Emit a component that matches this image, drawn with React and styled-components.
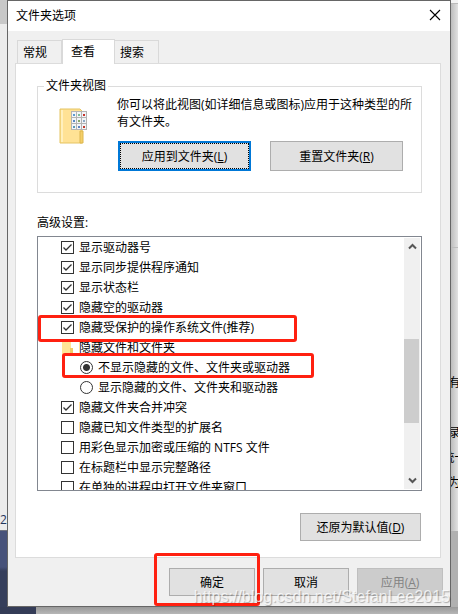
import React, { useState } from 'react';
import styled, { createGlobalStyle, css } from 'styled-components';

const GlobalStyle = createGlobalStyle`
  * {
    box-sizing: border-box;
  }

  body {
    margin: 0;
    font-family: 'Open Sans', 'Noto Sans CJK SC', sans-serif;
    font-size: 12px;
    line-height: 17px;
    color: #000;
    overflow: hidden;
  }
`;

const Desktop = styled.div`
  display: grid;
  grid-template-columns: 7px minmax(0, 1fr) 7px;
  grid-template-rows: auto 1fr;
  position: relative;
  min-height: 100vh;
  background: #b4b4b4;
`;

const LeftStrip = styled.div`
  display: flex;
  flex-direction: column;
  justify-content: flex-end;
  overflow: hidden;
  color: #24365c;
  background: linear-gradient(
    #c8c8c8 0 24px,
    #ececec 24px calc(100% - 77px),
    #6f7380 calc(100% - 77px) calc(100% - 76px),
    #47527a calc(100% - 76px) calc(100% - 40px),
    #353e5b calc(100% - 36px)
  );

  span {
    height: 96px;
    white-space: nowrap;
  }
`;

const RightStrip = styled.div`
  display: flex;
  flex-direction: column;
  justify-content: flex-end;
  align-items: center;
  gap: 8px;
  padding-bottom: 116px;
  overflow: hidden;
  white-space: nowrap;
  background: linear-gradient(
      #f4f4f4 3px,
      #bbb 3px 4px,
      transparent 4px 247px,
      #bdbdbd 247px 248px,
      transparent 248px calc(100% - 76px),
      #b0b0b0 calc(100% - 76px)
    ),
    linear-gradient(to right, #bdbdbd, #e2e2e2);

  span:first-child {
    margin-bottom: 25px;
  }
`;

const BottomStrip = styled.div`
  grid-column: 1 / -1;
  min-height: 7px;
  background: linear-gradient(to right, #343c57 36px, transparent 36px),
    linear-gradient(#999, #b6b6b6);
`;

const Dialog = styled.div`
  display: flex;
  flex-direction: column;
  min-width: 0;
  border: 1px solid #666;
  background: #f0f0f0;
`;

const TitleBar = styled.header`
  display: flex;
  justify-content: space-between;
  align-items: center;
  height: 30px;
  padding: 0 9px 2px 8px;
  background: #fff;
`;

const Title = styled.h1`
  margin: 0;
  font-size: 12px;
  font-weight: 400;
`;

const CloseButton = styled.button`
  display: flex;
  padding: 0;
  border: 0;
  background: none;
`;

const Content = styled.div`
  padding: 8px 9px 0 7px;
`;

const Tabs = styled.div`
  display: flex;
  align-items: flex-end;
  padding-left: 2px;
`;

const Tab = styled.button`
  width: 45px;
  height: 23px;
  padding: 0 0 0 5px;
  border: 1px solid #d9d9d9;
  border-bottom: 0;
  background: #f0f0f0;
  font: inherit;
  text-align: left;

  ${({ $active }) =>
    $active &&
    css`
      width: 53px;
      height: 25px;
      margin: 0 -1px -1px 0;
      padding: 0 0 1px 8px;
      background: #fff;
      z-index: 1;
    `}
`;

const TabPage = styled.main`
  padding: 15px 18px 15px 21px;
  border: 1px solid #dcdcdc;
  background: #fff;
`;

const Group = styled.fieldset`
  display: flex;
  align-items: flex-start;
  min-width: 0;
  height: 114px;
  margin: 0;
  padding: 3px 18px 0 21px;
  border: 1px solid #dcdcdc;
`;

const GroupTitle = styled.legend`
  margin-left: -15px;
  padding: 0 2px;
  line-height: 14px;
`;

const FolderPicture = styled.svg`
  flex: none;
  margin: 12px 30px 0 0;
`;

const GroupBody = styled.div`
  flex: 1;
  min-width: 0;

  p {
    margin: 0 -12px 11px 0;
  }
`;

const ButtonPair = styled.div`
  display: grid;
  grid-template-columns: 1fr 1fr;
  gap: 19px;
  margin-left: 1px;
`;

const PushButton = styled.button`
  width: ${({ $width }) => ($width ? `${$width}px` : 'auto')};
  height: ${({ $tall }) => ($tall ? 30 : 28)}px;
  padding: 0;
  border: 1px solid #adadad;
  background: #e1e1e1;
  color: #000;
  font: inherit;

  ${({ $focused }) =>
    $focused &&
    css`
      border: 2px solid #0078d7;
      outline: 1px dotted #000;
      outline-offset: -3px;
    `}

  &:disabled {
    border-color: #bfbfbf;
    background: #ccc;
    color: #838383;
  }
`;

const ListTitle = styled.h2`
  margin: 21px 0 5px;
  font-size: 12px;
  font-weight: 400;
`;

const ListBox = styled.div`
  display: flex;
  height: 255px;
  padding-right: 1px;
  border: 1px solid #828790;
`;

const Options = styled.div`
  flex: 1;
  min-width: 0;
  overflow: hidden;
  padding-left: 23px;
`;

const Row = styled.div`
  display: flex;
  align-items: center;
  position: relative;
  height: 20px;
  padding-left: ${({ $nested }) => ($nested ? 19 : 0)}px;
  white-space: nowrap;

  label {
    display: flex;
    align-items: center;
    gap: 5px;
  }
`;

const CheckInput = styled.input`
  appearance: none;
  width: 13px;
  height: 13px;
  margin: 0;
  border: 1px solid #333;
  background: #fff;

  &:checked {
    background: #fff
      url("data:image/svg+xml,%3Csvg xmlns='http://www.w3.org/2000/svg' viewBox='0 0 11 11'%3E%3Cpath d='M1.5 5.5 4 8 9.5 2.5' fill='none' stroke='%23333' stroke-width='1.3'/%3E%3C/svg%3E");
  }
`;

const RadioInput = styled.input`
  appearance: none;
  width: 13px;
  height: 13px;
  margin: 0;
  border: 1px solid #333;
  border-radius: 50%;
  background: #fff;

  &:checked {
    background: radial-gradient(circle, #333 3px, #fff 4px);
  }
`;

const SmallFolder = styled.svg`
  flex: none;
  margin-right: 5px;
`;

const Highlight = styled.span`
  position: absolute;
  top: ${({ $top }) => $top}px;
  left: ${({ $left }) => $left}px;
  width: ${({ $width }) => $width}px;
  height: ${({ $height }) => $height}px;
  border: 3px solid #ff2010;
  border-radius: 3px;
  pointer-events: none;
  z-index: 1;
`;

const ScrollBar = styled.div`
  display: flex;
  flex-direction: column;
  flex: none;
  width: 16px;
  margin: 1px 0;
  background: #f0f0f0;
`;

const ScrollButton = styled.button`
  display: flex;
  justify-content: center;
  align-items: center;
  width: 16px;
  height: 17px;
  padding: 0;
  border: 0;
  background: none;
`;

const ScrollTrack = styled.div`
  flex: 1;
  padding-top: 84px;
`;

const ScrollThumb = styled.div`
  width: 15px;
  height: 84px;
  background: #cdcdcd;
`;

const Restore = styled.div`
  display: flex;
  justify-content: flex-end;
  margin: 22px 1px 1px 0;
`;

const Footer = styled.footer`
  display: flex;
  justify-content: flex-end;
  gap: 8px;
  padding: 10px 7px;
`;

const ButtonSlot = styled.div`
  display: flex;
  position: relative;
`;

const Watermark = styled.div`
  position: absolute;
  right: 8px;
  bottom: 9px;
  color: rgba(255, 255, 255, 0.75);
  font-family: 'Liberation Sans', sans-serif;
  font-size: 16px;
  text-shadow: 1px 1px 1px rgba(0, 0, 0, 0.3);
  pointer-events: none;
  z-index: 2;
`;

const tabs = ['常规', '查看', '搜索'];

const initialOptions = [
  { text: '显示驱动器号', type: 'check', on: true },
  { text: '显示同步提供程序通知', type: 'check', on: true },
  { text: '显示状态栏', type: 'check', on: true },
  { text: '隐藏空的驱动器', type: 'check', on: true },
  {
    text: '隐藏受保护的操作系统文件(推荐)',
    type: 'check',
    on: true,
    mark: { $top: -2, $left: -23, $width: 259, $height: 27 },
  },
  { text: '隐藏文件和文件夹', type: 'folder' },
  {
    text: '不显示隐藏的文件、文件夹或驱动器',
    type: 'radio',
    on: true,
    mark: { $top: -4, $left: 1, $width: 252, $height: 25 },
  },
  { text: '显示隐藏的文件、文件夹和驱动器', type: 'radio', on: false },
  { text: '隐藏文件夹合并冲突', type: 'check', on: true },
  { text: '隐藏已知文件类型的扩展名', type: 'check', on: false },
  { text: '用彩色显示加密或压缩的 NTFS 文件', type: 'check', on: false },
  { text: '在标题栏中显示完整路径', type: 'check', on: false },
  { text: '在单独的进程中打开文件夹窗口', type: 'check', on: false },
];

const thumbColors = ['#5b9bd0', '#7dbb98', '#c8342c', '#5a88c4', '#84a86c', '#8faac4', '#5a9ab8', '#5d82c0', '#c43a2c'];

const FolderIcon = () => (
  <FolderPicture width='28' height='36' viewBox='0 0 28 36' aria-hidden='true'>
    <path d='M1 1h20l2 2v32H1z' fill='#ffe295' stroke='#e5c463' />
    <path d='M2 2h2v32H2z' fill='#fff0bd' />
    <path d='M21 23h3v12h-3z' fill='#f4cf68' stroke='#ddb64e' />
    <path d='M12 3h16v19H12z' fill='#b4b4b4' />
    {thumbColors.map((color, i) => {
      const x = 13 + (i % 3) * 5;
      const y = 4 + Math.floor(i / 3) * 6;
      return (
        <g key={i}>
          <rect x={x} y={y} width='4' height='5' fill='#f2f5f8' />
          <rect x={x + 1} y={y + 2} width='2' height='2' fill={color} />
        </g>
      );
    })}
  </FolderPicture>
);

const Arrow = ({ down }) => (
  <svg width='9' height='7' viewBox='0 0 9 7' aria-hidden='true'>
    <path
      d={down ? 'M1 1.5 4.5 5 8 1.5' : 'M1 5.5 4.5 2 8 5.5'}
      fill='none'
      stroke='#555'
      strokeWidth='2'
    />
  </svg>
);

const App = () => {
  const [activeTab, setActiveTab] = useState('查看');
  const [options, setOptions] = useState(initialOptions);

  const onToggle = index => {
    const picked = options[index];
    setOptions(
      options.map((option, i) => {
        if (picked.type === 'radio') {
          return option.type === 'radio' ? { ...option, on: i === index } : option;
        }
        return i === index ? { ...option, on: !option.on } : option;
      })
    );
  };

  return (
    <>
      <GlobalStyle />
      <Desktop>
        <LeftStrip>
          <span>28</span>
        </LeftStrip>
        <Dialog role='dialog' aria-labelledby='dialog-title'>
          <TitleBar>
            <Title id='dialog-title'>文件夹选项</Title>
            <CloseButton aria-label='关闭'>
              <svg width='12' height='12' viewBox='0 0 12 12'>
                <path d='M1 1l10 10M11 1 1 11' stroke='#000' strokeWidth='1.1' />
              </svg>
            </CloseButton>
          </TitleBar>
          <Content>
            <Tabs role='tablist'>
              {tabs.map(tab => (
                <Tab
                  key={tab}
                  role='tab'
                  aria-selected={tab === activeTab}
                  $active={tab === activeTab}
                  onClick={() => setActiveTab(tab)}
                >
                  {tab}
                </Tab>
              ))}
            </Tabs>
            <TabPage>
              <Group>
                <GroupTitle>文件夹视图</GroupTitle>
                <FolderIcon />
                <GroupBody>
                  <p>你可以将此视图(如详细信息或图标)应用于这种类型的所有文件夹。</p>
                  <ButtonPair>
                    <PushButton $tall $focused>
                      应用到文件夹(<u>L</u>)
                    </PushButton>
                    <PushButton $tall>
                      重置文件夹(<u>R</u>)
                    </PushButton>
                  </ButtonPair>
                </GroupBody>
              </Group>
              <ListTitle>高级设置:</ListTitle>
              <ListBox>
                <Options>
                  {options.map((option, i) => (
                    <Row key={option.text} $nested={option.type === 'radio'}>
                      {option.type === 'folder' ? (
                        <>
                          <SmallFolder width='13' height='16' viewBox='0 0 13 16' aria-hidden='true'>
                            <path d='M1 1h9v15H1z' fill='#ffe596' />
                            <path d='M9 9h3v7H9z' fill='#f0cb68' />
                          </SmallFolder>
                          {option.text}
                        </>
                      ) : (
                        <label>
                          {option.type === 'check' ? (
                            <CheckInput type='checkbox' checked={option.on} onChange={() => onToggle(i)} />
                          ) : (
                            <RadioInput type='radio' name='hidden' checked={option.on} onChange={() => onToggle(i)} />
                          )}
                          {option.text}
                        </label>
                      )}
                      {option.mark && <Highlight {...option.mark} />}
                    </Row>
                  ))}
                </Options>
                <ScrollBar>
                  <ScrollButton aria-label='向上'>
                    <Arrow />
                  </ScrollButton>
                  <ScrollTrack>
                    <ScrollThumb />
                  </ScrollTrack>
                  <ScrollButton aria-label='向下'>
                    <Arrow down />
                  </ScrollButton>
                </ScrollBar>
              </ListBox>
              <Restore>
                <PushButton $width={121}>
                  还原为默认值(<u>D</u>)
                </PushButton>
              </Restore>
            </TabPage>
          </Content>
          <Footer>
            <ButtonSlot>
              <PushButton $width={86}>确定</PushButton>
              <Highlight $top={-15} $left={-15} $width={106} $height={53} />
            </ButtonSlot>
            <PushButton $width={86}>取消</PushButton>
            <PushButton $width={86} disabled>
              应用(<u>A</u>)
            </PushButton>
          </Footer>
        </Dialog>
        <RightStrip>
          <span>有</span>
          <span>录</span>
          <span>统一</span>
          <span>为</span>
        </RightStrip>
        <BottomStrip />
        <Watermark>https://blog.csdn.net/StefanLee2015</Watermark>
      </Desktop>
    </>
  );
};

export default App;
